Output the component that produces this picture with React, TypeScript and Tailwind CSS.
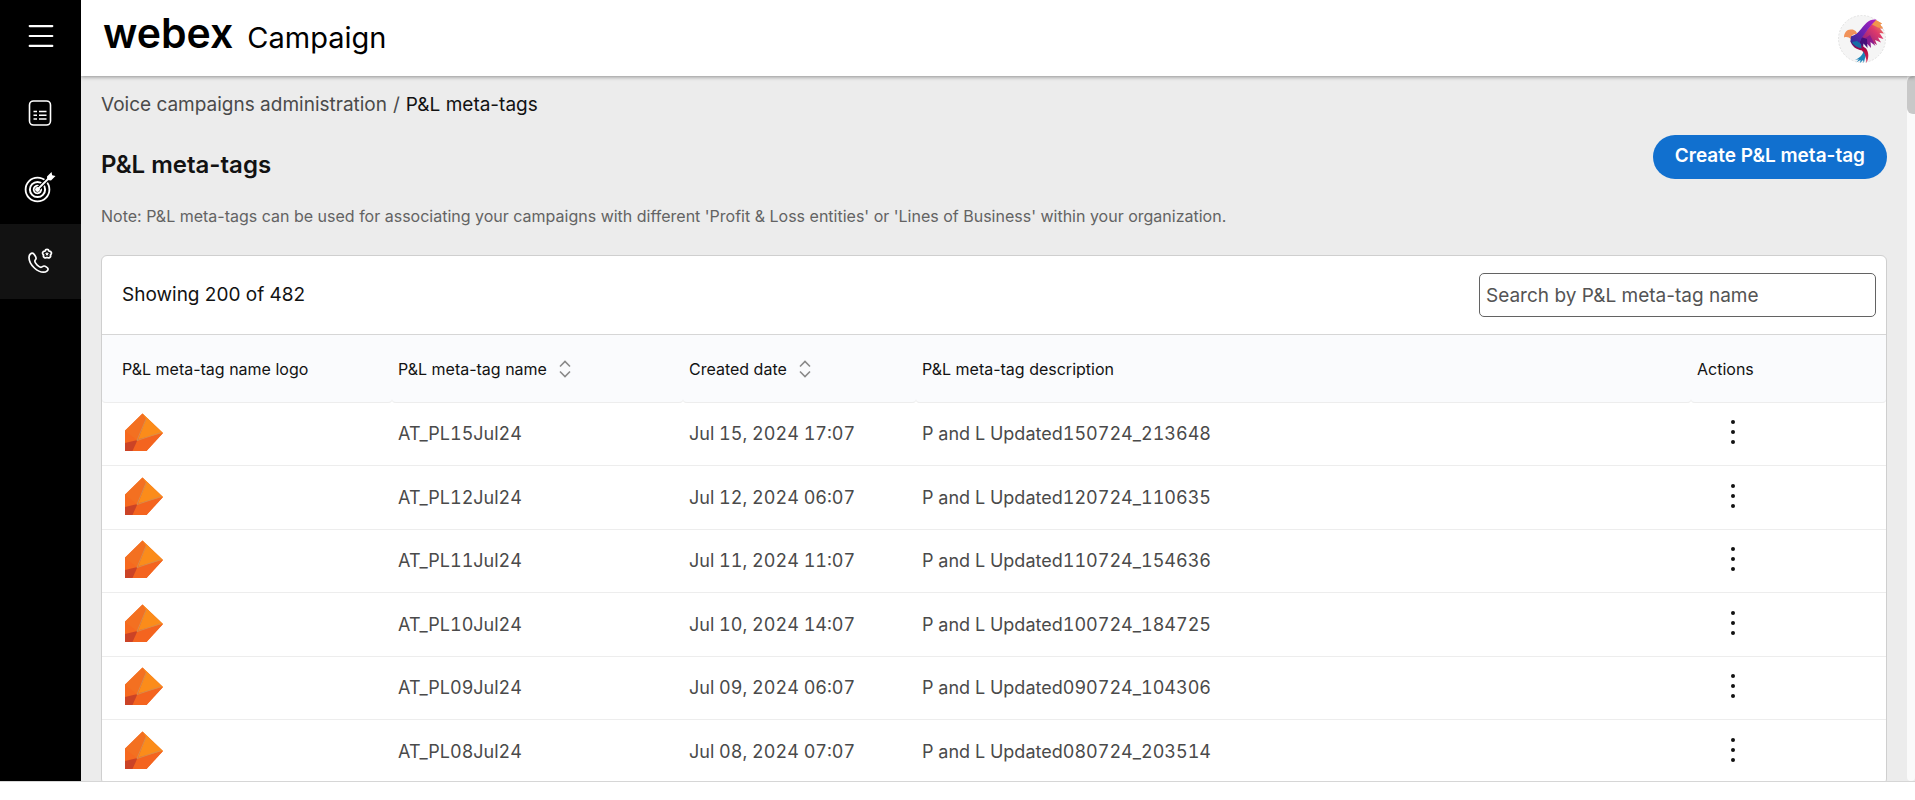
import { Menu } from "lucide-react"

interface MetaTag {
    name: string
    created: string
    description: string
}

interface SidebarLinkProps {
    label: string
    active?: boolean
    className: string
    children: React.ReactNode
}

const metaTags: MetaTag[] = [
    { name: "AT_PL15Jul24", created: "Jul 15, 2024 17:07", description: "P and L Updated150724_213648" },
    { name: "AT_PL12Jul24", created: "Jul 12, 2024 06:07", description: "P and L Updated120724_110635" },
    { name: "AT_PL11Jul24", created: "Jul 11, 2024 11:07", description: "P and L Updated110724_154636" },
    { name: "AT_PL10Jul24", created: "Jul 10, 2024 14:07", description: "P and L Updated100724_184725" },
    { name: "AT_PL09Jul24", created: "Jul 09, 2024 06:07", description: "P and L Updated090724_104306" },
    { name: "AT_PL08Jul24", created: "Jul 08, 2024 07:07", description: "P and L Updated080724_203514" },
]

const ServicesIcon = () => (
    <svg width="24" height="28" viewBox="0 0 24 28" fill="none" stroke="white">
        <rect x="1.5" y="2" width="21" height="24" rx="4" strokeWidth="1.6" />
        <path d="M5.5 12.5h3.5M5.5 16.3h3.5M5.5 20.1h3.5M11 12.5h7.5M11 16.3h7.5M11 20.1h7.5" strokeWidth="1.5" />
    </svg>
)

const TargetIcon = () => (
    <svg width="32" height="32" viewBox="0 0 32 32" fill="none" stroke="white">
        <circle cx="13.5" cy="18.5" r="11.9" strokeWidth="1.8" />
        <circle cx="13.5" cy="18.5" r="7.6" strokeWidth="2" />
        <path d="M15.6 15.4a3.8 3.8 0 1 0 1.5 2.1" strokeWidth="1.8" />
        <path d="M13.5 18.5L25 7" stroke="black" strokeWidth="4" />
        <path d="M13 19L26 6" strokeWidth="1.8" />
        <circle cx="13.5" cy="18.5" r="2.4" fill="white" stroke="none" />
        <path d="M23 5.5l4.5-4.5.7 3.3 3.3.6-4.5 4.6-3.7-.4z" fill="white" stroke="none" />
    </svg>
)

const VoiceIcon = () => (
    <svg width="26" height="26" viewBox="0 0 26 26" fill="none" stroke="white" strokeLinejoin="round">
        <path d="M5.3 5.2c-1 0-3.3 1.3-3.3 4.3 0 3 2.2 7.5 5.4 10.5 3.2 3 6.2 4.2 9.1 4.2 3 0 4.6-2 4.6-3.2 0-1.1-2.8-3-4.1-3-1.3 0-1.7 1.3-3 1.3-1.8 0-6.2-4-6.2-6 0-1.3 1.3-1.7 1.3-3.1 0-1.5-2.2-5-3.8-5z" strokeWidth="1.7" />
        <path d="M18 3.1c.3-2.3 3.7-2.3 4 0 2.3-.3 3.3 2.5 1.4 3.8 1 2.1-1.6 3.9-3.4 2.5-1.8 1.4-4.4-.4-3.4-2.5-1.9-1.3-.9-4.1 1.4-3.8z" strokeWidth="1.7" />
        <path d="M20 3.8l.6 1.4 1.5.1-1.2 1 .4 1.5-1.3-.8-1.3.8.4-1.5-1.2-1 1.5-.1z" fill="white" stroke="none" />
    </svg>
)

const BirdAvatar = () => (
    <svg width="48" height="48" viewBox="0 0 48 48">
        <defs>
            <linearGradient id="wing" x1="1" y1="0" x2="0" y2="1">
                <stop offset="0" stopColor="#b321c4" />
                <stop offset="0.5" stopColor="#6a22b0" />
                <stop offset="1" stopColor="#22308f" />
            </linearGradient>
            <linearGradient id="feather" x1="1" y1="0" x2="0" y2="1">
                <stop offset="0" stopColor="#f2a052" />
                <stop offset="0.4" stopColor="#de3a6b" />
                <stop offset="1" stopColor="#7a1a86" />
            </linearGradient>
            <linearGradient id="tail" x1="0" y1="0" x2="0.3" y2="1">
                <stop offset="0" stopColor="#4b167f" />
                <stop offset="0.6" stopColor="#b0083f" />
                <stop offset="1" stopColor="#d2234f" />
            </linearGradient>
        </defs>
        <circle cx="24" cy="24" r="23.5" fill="#f5f5f5" stroke="#e2e2e2" strokeDasharray="2 1.5" />
        <path d="M37 5L44 8.5 42 9.5 45 13.5 42 13.5 46 18.5 41.5 18 45.5 24 40 22.5 43 27.500 37 25 39 30 33 26.500 28 30 22 24z" fill="url(#feather)" />
        <path d="M38 5l6 3.5-2 1 3 4-5-1-6-3z" fill="#f0964c" />
        <path d="M32 20l5.5 11-5-4 .5 6-4.500-5-4-3z" fill="#8a1d8e" />
        <path d="M23 22l6 2 .5 9-4-4.500-.5 5-4-4z" fill="#45107a" />
        <path d="M12 25.5c3 0 6 1 9 3l7 5c3 4 3 9 .5 14.5 0-5-1.5-8.5-4.5-12.5-6-1-10-4-12-10z" fill="url(#tail)" />
        <path d="M38.5 4.5C31 3.5 27 9 23.500 13.500 20 18 17 20.500 12 21.500l1 5c2 3 5 5 8 5.500 1-6 2-9 6-13.500 3-4 6-9 11.500-14z" fill="url(#wing)" />
        <path d="M6 22.5c0-5 3-8.500 7.500-8 3.500 0 5.500 2.500 5.500 4.500-4 0-7 2-6 5-2-1.500-4-2.500-7-1.500z" fill="#f0925a" />
        <path d="M14 27c2 4 6 5.5 9.5 6.5l-.5-4.5-4-3z" fill="#176ea6" />
        <path d="M25.5 36c-.5 4-4 7-8.5 9l4-.8-2.5 3 4-2.2-.5 3 3-3 .8 3 1.700-7z" fill="#1d83b8" />
    </svg>
)

const MetaTagLogo = () => (
    <svg width="42" height="42" viewBox="0 0 42 42" className="block">
        <path d="M20.5 2.5L41 22 24.5 40H3V19.5z" fill="#f6691f" />
        <path d="M20.5 2.5L41 22 15.5 30.5 23.5 9z" fill="#fb8c1a" />
        <path d="M20.5 2.5L24 8 15.5 29.5 3 20z" fill="#f37021" />
        <path d="M41 22L15.5 28.5 10 40h14.5z" fill="#f4641f" />
        <path d="M3 32l12.5-3L10.5 40H3z" fill="#cb4326" />
        <path d="M24 8L15 29.5 39 21.5" stroke="#d98c4a" strokeWidth="1" fill="none" />
    </svg>
)

const SortIcon = () => (
    <svg width="12" height="18" viewBox="0 0 12 18" fill="none" stroke="#8a8a8a" strokeWidth="1.6">
        <path d="M1 6.5l5-5 5 5M1 11.5l5 5 5-5" />
    </svg>
)

const SidebarLink: React.FC<SidebarLinkProps> = ({ label, active, className, children }) => (
    <a
        href="#"
        aria-label={label}
        className={`flex items-center justify-center pr-[2px] ${active ? "bg-[#121212]" : ""} ${className}`}
    >
        {children}
    </a>
)

const Sidebar = () => (
    <nav className="flex w-[81px] shrink-0 flex-col bg-black text-white">
        <button aria-label="Menu" className="flex h-[75px] items-center justify-center pb-1">
            <Menu size={34} strokeWidth={1.5} />
        </button>
        <SidebarLink label="Services" className="h-[75px]">
            <ServicesIcon />
        </SidebarLink>
        <SidebarLink label="Campaigns" className="h-[74px]">
            <TargetIcon />
        </SidebarLink>
        <SidebarLink label="Voice campaigns" active className="h-[75px] pb-[2px]">
            <VoiceIcon />
        </SidebarLink>
    </nav>
)

const Header = () => (
    <header className="z-10 flex h-[76px] shrink-0 items-center justify-between bg-white pl-[22px] pr-[29px] shadow-[0_1px_4px_rgba(0,0,0,0.4)]">
        <a href="#" className="flex items-baseline gap-[14px] pb-[10px] text-black">
            <span className="text-[41px] leading-[56px] font-semibold">webex</span>
            <span className="text-[29px]">Campaign</span>
        </a>
        <button aria-label="Account" className="rounded-full pt-[2px]">
            <BirdAvatar />
        </button>
    </header>
)

const MetaTagTable = () => (
    <table className="w-full table-fixed border-separate border-spacing-0 text-left text-lg text-[#4a4a4a]">
        <colgroup>
            <col className="w-[290px]" />
            <col className="w-[291px]" />
            <col className="w-[233px]" />
            <col />
            <col className="w-[195px]" />
        </colgroup>
        <thead>
            <tr className="h-[68px] bg-[#ededed] text-base text-[#121212] *:rounded-b *:border-b *:border-[#ededed] *:bg-[#fafbfd] *:pl-[6px] *:font-normal">
                <th scope="col">
                    <span className="pl-[14px]">P&amp;L meta-tag name logo</span>
                </th>
                <th scope="col">
                    <button className="flex items-center gap-3">P&amp;L meta-tag name <SortIcon /></button>
                </th>
                <th scope="col">
                    <button className="flex items-center gap-3">Created date <SortIcon /></button>
                </th>
                <th scope="col">P&amp;L meta-tag description</th>
                <th scope="col">Actions</th>
            </tr>
        </thead>
        <tbody className="tabular-nums">
            {metaTags.map((tag) => (
                <tr key={tag.name} className="odd:h-[63px] even:h-16 *:border-b *:border-[#ededed] *:py-0 *:pl-[6px]">
                    <td>
                        <div className="pb-1 pl-[14px]"><MetaTagLogo /></div>
                    </td>
                    <td>{tag.name}</td>
                    <td>{tag.created}</td>
                    <td>{tag.description}</td>
                    <td>
                        <button aria-label={`Actions for ${tag.name}`} className="ml-6 flex w-6 justify-center pb-1">
                            <svg width="6" height="26" viewBox="0 0 6 26" fill="#121212">
                                <circle cx="3" cy="3" r="2" />
                                <circle cx="3" cy="13" r="2" />
                                <circle cx="3" cy="23" r="2" />
                            </svg>
                        </button>
                    </td>
                </tr>
            ))}
        </tbody>
    </table>
)

export default function App() {
    return (
        <div className="h-screen bg-white pb-[18px] font-['Inter','Liberation_Sans',sans-serif]">
            <div className="flex h-full overflow-hidden border-b border-[#d6d6d6]">
                <Sidebar />
                <div className="flex min-w-0 flex-1 flex-col">
                    <Header />
                    <div className="flex min-h-0 flex-1 bg-[#ececec]">
                        <main className="min-w-0 flex-1 overflow-hidden px-5 pt-[17px]">
                            <nav aria-label="Breadcrumb" className="flex gap-[6px] text-[19px] leading-6 text-[#4a4a4a]">
                                <a href="#">Voice campaigns administration</a>
                                <span>/</span>
                                <span className="text-[#121212]">P&amp;L meta-tags</span>
                            </nav>
                            <div className="mt-[18px] flex items-start justify-between">
                                <h1 className="pt-[14px] text-2xl font-semibold text-[#121212]">P&amp;L meta-tags</h1>
                                <button className="h-11 rounded-full bg-[#1170cf] px-[22px] pb-[2px] text-[19px] font-semibold text-white">
                                    Create P&amp;L meta-tag
                                </button>
                            </div>
                            <p className="mt-[23px] text-base text-[#636363]">
                                Note: P&amp;L meta-tags can be used for associating your campaigns with different 'Profit &amp; Loss entities' or 'Lines of Business' within your organization.
                            </p>
                            <section className="mt-[27px] overflow-hidden rounded-md border border-[#cfcfcf] bg-white">
                                <div className="flex h-[79px] items-center justify-between border-b border-[#d6d6d6] pr-[10px] pl-5">
                                    <span className="text-[19px] text-[#121212]">Showing 200 of 482</span>
                                    <input
                                        type="text"
                                        aria-label="Search by P&L meta-tag name"
                                        placeholder="Search by P&L meta-tag name"
                                        className="h-11 w-[397px] rounded-[5px] border border-[#636363] px-[6px] text-[19px] placeholder:text-[#545454]"
                                    />
                                </div>
                                <MetaTagTable />
                            </section>
                        </main>
                        {/* scroll track */}
                        <div className="w-2 rounded-b-md bg-[#fafafa]">
                            <div className="h-[38px] rounded-l-md bg-[#c8c8c8]" />
                        </div>
                    </div>
                </div>
            </div>
        </div>
    )
}
